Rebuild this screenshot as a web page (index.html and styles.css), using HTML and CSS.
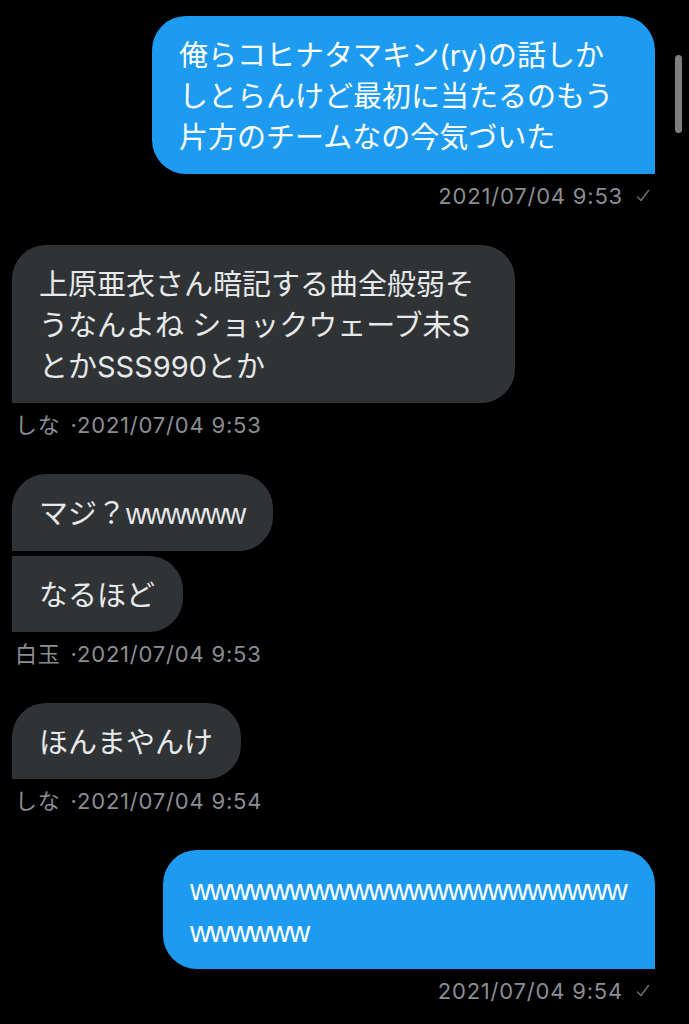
FILE: index.html
```html
<!DOCTYPE html>
<html lang="ja">
<head>
<meta charset="utf-8">
<title>Messages</title>
<link rel="stylesheet" href="styles.css">
</head>
<body>
<main class="chat">
  <section class="group group--sent">
    <div class="bubble bubble--sent">俺らコヒナタマキン(ry)の話しかしとらんけど最初に当たるのもう片方のチームなの今気づいた</div>
    <div class="meta meta--sent">2021/07/04 9:53<svg class="check" viewBox="0 0 14 14" width="14" height="14" aria-hidden="true"><polyline points="1.5,8 5,11.5 12.5,1.5" /></svg></div>
  </section>

  <section class="group group--recv">
    <div class="bubble bubble--recv">上原亜衣さん暗記する曲全般弱そうなんよね ショックウェーブ未SとかSSS990とか</div>
    <div class="meta"><span class="meta__name">しな</span>·2021/07/04 9:53</div>
  </section>

  <section class="group group--recv">
    <div class="bubble bubble--recv">マジ？<span class="lol">wwwwww</span></div>
    <div class="bubble bubble--recv bubble--cont">なるほど</div>
    <div class="meta"><span class="meta__name">白玉</span>·2021/07/04 9:53</div>
  </section>

  <section class="group group--recv">
    <div class="bubble bubble--recv">ほんまやんけ</div>
    <div class="meta"><span class="meta__name">しな</span>·2021/07/04 9:54</div>
  </section>

  <section class="group group--sent">
    <div class="bubble bubble--sent bubble--narrow"><span class="lol">wwwwwwwwwwwwwwwwwwwwwwwwwwww</span></div>
    <div class="meta meta--sent">2021/07/04 9:54<svg class="check" viewBox="0 0 14 14" width="14" height="14" aria-hidden="true"><polyline points="1.5,8 5,11.5 12.5,1.5" /></svg></div>
  </section>
</main>
<div class="scrollbar"></div>
</body>
</html>
```

FILE: styles.css
```css
html, body {
  margin: 0;
  padding: 0;
  background: #000;
}

body {
  font-family: Inter, "Noto Sans CJK JP", sans-serif;
  color: #fff;
  min-height: 1024px;
}

.chat {
  display: flex;
  flex-direction: column;
  gap: 35px;
  padding: 16px 34px 0 12px;
}

.group {
  display: flex;
  flex-direction: column;
  gap: 5px;
}

.group--sent {
  align-items: flex-end;
}

.group--recv {
  align-items: flex-start;
}

.bubble {
  max-width: 448px;
  padding: 19px 28px 16px 27px;
  font-size: 29px;
  line-height: 41px;
  border-radius: 34px;
  word-break: break-all;
}

.lol {
  font-family: "Liberation Sans", "Noto Sans CJK JP", sans-serif;
  font-size: 29px;
  letter-spacing: -1.1px;
}

.bubble--sent {
  background: #1d9bf0;
  color: #fff;
  border-bottom-right-radius: 0;
}

.bubble--narrow {
  max-width: 438px;
  padding-right: 27px;
}

.bubble--recv {
  background: #2f3336;
  color: #e7e9ea;
  border-bottom-left-radius: 0;
}

.bubble--cont {
  border-top-left-radius: 0;
}

.meta {
  margin-top: 3px;
  font-size: 22px;
  line-height: 28px;
  letter-spacing: 0.8px;
  color: #8b8e92;
  padding-left: 3px;
}

.meta__name {
  margin-right: 10px;
}

.meta--sent {
  display: flex;
  align-items: center;
  gap: 13px;
  padding-left: 0;
  padding-right: 5px;
}

.check {
  fill: none;
  stroke: #6f7276;
  stroke-width: 1.4;
  stroke-linecap: round;
  stroke-linejoin: round;
}

.scrollbar {
  position: fixed;
  top: 55px;
  right: 7px;
  width: 7px;
  height: 78px;
  border-radius: 4px;
  background: #7f7f7f;
}
```
